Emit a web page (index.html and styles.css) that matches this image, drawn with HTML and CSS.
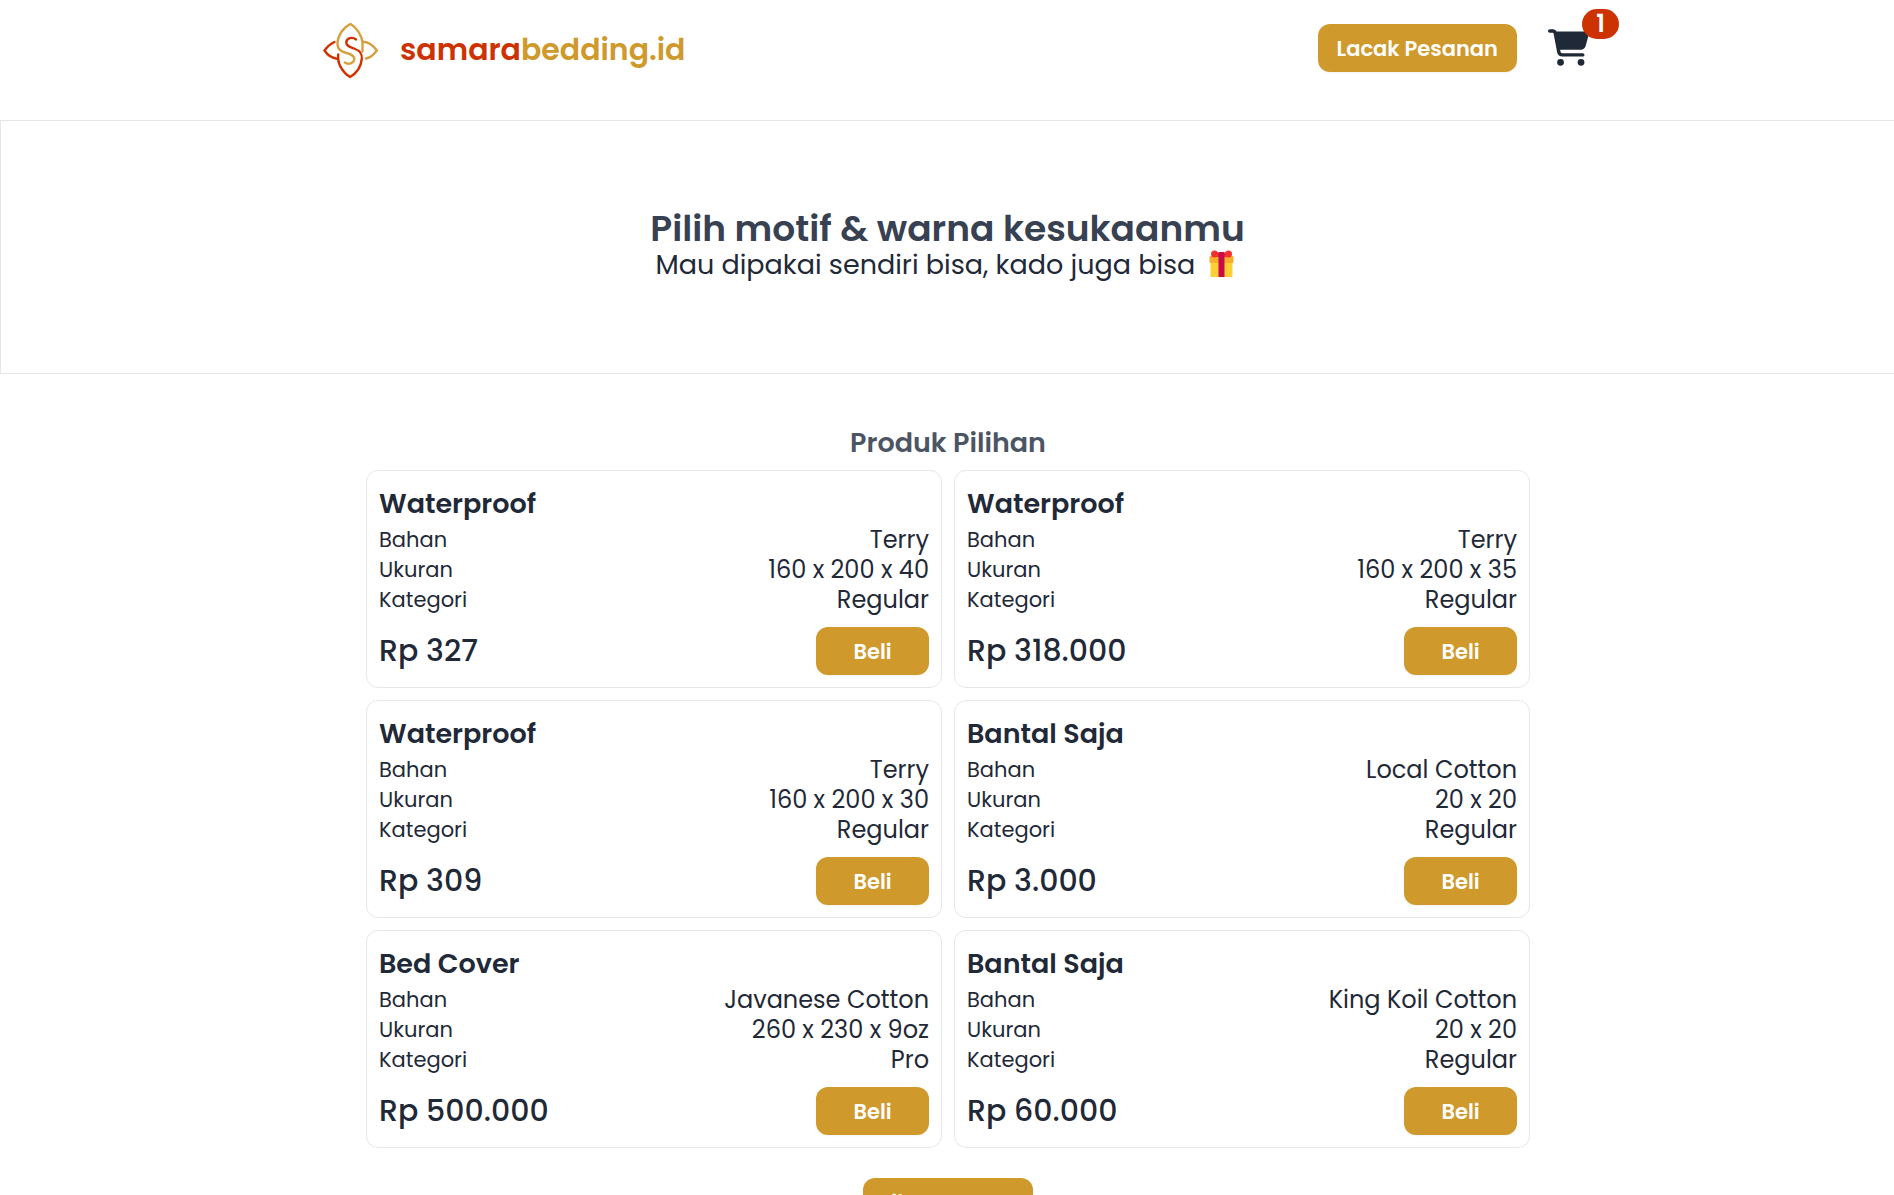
FILE: index.html
```html
<!DOCTYPE html>
<html lang="id">
<head>
    <meta charset="UTF-8">
    <meta name="viewport" content="width=device-width, initial-scale=1.0">
    <title>samarabedding.id</title>
    <link rel="stylesheet" href="styles.css">
</head>
<body>
    <header class="header">
        <a href="#" class="brand">
            <svg class="logo" viewBox="0 0 66 66" fill="none" stroke-width="2.4" stroke-linecap="round">
                <path class="gold" d="M44.500 34.500 V26 C44 18 38 10 32.500 7 C26 10 19.500 18 19.500 27 C19.500 33 24 34.500 28.500 36 C34 37.500 36.500 39 36.300 42 C36 46.500 30.500 48 26.800 45.500"/>
                <path class="gold" d="M45.500 24.800 C51 25.300 55.500 29 58.800 33.500 C56 37.500 53 40.500 48 41.500"/>
                <path class="red" d="M38 22.500 C34.500 19.500 28.300 21 28.300 25.500 C28.300 29 32 30 36 31.500 C41.500 33.500 44.500 36 43.800 42 C43 50 38 56.500 32 60 C26.500 57 20.500 49 20.200 42 V37.500"/>
                <path class="red" d="M16.500 25 C12 27 9 30 6.500 33.500 C9.500 38 13.500 41 19 41.700"/>
            </svg>
            <span class="brand-name"><span class="red-text">samara</span>bedding.id</span>
        </a>
        <div class="actions">
            <button class="btn">Lacak Pesanan</button>
            <a href="#" class="cart" aria-label="Keranjang">
                <svg viewBox="0 0 576 512" fill="currentColor">
                    <path d="M0 24C0 10.700 10.700 0 24 0H69.500c22 0 41.500 12.800 50.600 32h411c26.300 0 45.500 25 38.600 50.400l-41 152.300c-8.500 31.400-37 53.300-69.500 53.300H170.700l5.400 28.500c2.200 11.300 12.100 19.500 23.600 19.500H488c13.300 0 24 10.700 24 24s-10.700 24-24 24H199.700c-34.600 0-64.300-24.600-70.700-58.500L77.400 54.500c-.700-3.800-4-6.500-7.900-6.500H24C10.700 48 0 37.300 0 24zM128 464a48 48 0 1 1 96 0 48 48 0 1 1 -96 0zm336-48a48 48 0 1 1 0 96 48 48 0 1 1 0-96z"/>
                </svg>
                <span class="badge">1</span>
            </a>
        </div>
    </header>

    <section class="hero">
        <h1>Pilih motif &amp; warna kesukaanmu</h1>
        <p>Mau dipakai sendiri bisa, kado juga bisa
            <svg class="gift" viewBox="0 0 24 28">
                <path fill="#fcd034" d="M1 12h22v14q0 1-1 1H2q-1 0-1-1z"/>
                <path fill="#f5b02e" d="M1 6h22q1 0 1 1v5q0 1-1 1H1q-1 0-1-1V7q0-1 1-1z"/>
                <circle fill="#f8312f" cx="5" cy="4" r="3.500"/>
                <circle fill="#f8312f" cx="19" cy="4" r="3.500"/>
                <path fill="#f8312f" d="M5 1l5 2v4H4zM19 1l-5 2v4h6z"/>
                <path fill="#ca0b4a" d="M9 3q0-1 1-1h4q1 0 1 1v24H9z"/>
            </svg>
        </p>
    </section>

    <main class="products">
        <h2>Produk Pilihan</h2>
        <div class="grid">
            <article class="card">
                <h3>Waterproof</h3>
                <dl>
                    <dt>Bahan</dt><dd>Terry</dd>
                    <dt>Ukuran</dt><dd>160 x 200 x 40</dd>
                    <dt>Kategori</dt><dd>Regular</dd>
                </dl>
                <div class="buy">
                    <span class="price">Rp 327</span>
                    <button class="btn btn-buy">Beli</button>
                </div>
            </article>
            <article class="card">
                <h3>Waterproof</h3>
                <dl>
                    <dt>Bahan</dt><dd>Terry</dd>
                    <dt>Ukuran</dt><dd>160 x 200 x 35</dd>
                    <dt>Kategori</dt><dd>Regular</dd>
                </dl>
                <div class="buy">
                    <span class="price">Rp 318.000</span>
                    <button class="btn btn-buy">Beli</button>
                </div>
            </article>
            <article class="card">
                <h3>Waterproof</h3>
                <dl>
                    <dt>Bahan</dt><dd>Terry</dd>
                    <dt>Ukuran</dt><dd>160 x 200 x 30</dd>
                    <dt>Kategori</dt><dd>Regular</dd>
                </dl>
                <div class="buy">
                    <span class="price">Rp 309</span>
                    <button class="btn btn-buy">Beli</button>
                </div>
            </article>
            <article class="card">
                <h3>Bantal Saja</h3>
                <dl>
                    <dt>Bahan</dt><dd>Local Cotton</dd>
                    <dt>Ukuran</dt><dd>20 x 20</dd>
                    <dt>Kategori</dt><dd>Regular</dd>
                </dl>
                <div class="buy">
                    <span class="price">Rp 3.000</span>
                    <button class="btn btn-buy">Beli</button>
                </div>
            </article>
            <article class="card">
                <h3>Bed Cover</h3>
                <dl>
                    <dt>Bahan</dt><dd>Javanese Cotton</dd>
                    <dt>Ukuran</dt><dd>260 x 230 x 9oz</dd>
                    <dt>Kategori</dt><dd>Pro</dd>
                </dl>
                <div class="buy">
                    <span class="price">Rp 500.000</span>
                    <button class="btn btn-buy">Beli</button>
                </div>
            </article>
            <article class="card">
                <h3>Bantal Saja</h3>
                <dl>
                    <dt>Bahan</dt><dd>King Koil Cotton</dd>
                    <dt>Ukuran</dt><dd>20 x 20</dd>
                    <dt>Kategori</dt><dd>Regular</dd>
                </dl>
                <div class="buy">
                    <span class="price">Rp 60.000</span>
                    <button class="btn btn-buy">Beli</button>
                </div>
            </article>
        </div>
        <button class="btn btn-more">Lihat Semua</button>
    </main>
</body>
</html>
```
FILE: styles.css
```css
*{
    box-sizing: border-box;
    margin: 0;
    padding: 0;
}
html{
    scrollbar-width: none;
}
body{
    font-family: Poppins, Inter, sans-serif;
    color: #1f2937;
    background-color: #ffffff;
}
.header{
    display: flex;
    justify-content: space-between;
    align-items: flex-start;
    max-width: 1282px;
    height: 120px;
    margin: 0 auto;
    padding: 0 0 0 12px;
}
.brand{
    display: flex;
    align-items: center;
    gap: 16px;
    padding-top: 17px;
    text-decoration: none;
    color: #cf992b;
}
.logo{
    width: 66px;
    height: 66px;
}
.gold{
    stroke: #d6a040;
}
.red{
    stroke: #cf3300;
}
.brand-name{
    font-size: 30px;
    line-height: 40px;
    font-weight: 600;
}
.red-text{
    color: #cc3300;
}
.actions{
    display: flex;
    gap: 31px;
    padding-top: 24px;
}
.btn{
    height: 48px;
    padding: 0 19px;
    border: none;
    border-radius: 12px;
    background-color: #cf992b;
    color: #ffffff;
    font-family: inherit;
    font-size: 21px;
    font-weight: 600;
    box-shadow: 0 1px 2px rgba(0, 0, 0, 0.05);
    cursor: pointer;
}
.cart{
    position: relative;
    width: 40px;
    padding-top: 5px;
    color: #1f2937;
}
.cart svg{
    display: block;
    width: 41px;
    height: 37px;
}
.badge{
    position: absolute;
    top: -15px;
    left: 34px;
    width: 37px;
    height: 30px;
    border-radius: 15px;
    background-color: #cc3300;
    color: #ffffff;
    font-size: 24px;
    line-height: 30px;
    font-weight: 600;
    text-align: center;
}
.hero{
    padding: 88px 24px 92px;
    border: 1px solid #e5e7eb;
    border-right: none;
    text-align: center;
}
.hero h1{
    font-size: 36px;
    line-height: 40px;
    font-weight: 600;
    color: #374151;
}
.hero p{
    font-size: 27px;
    line-height: 32px;
}
.gift{
    width: 25px;
    height: 28px;
    margin: 0 6px;
    vertical-align: -4px;
}
.products{
    max-width: 1166px;
    margin: 0 auto;
    padding: 52px 0 0 2px;
    text-align: center;
}
.products h2{
    font-size: 27px;
    line-height: 34px;
    font-weight: 600;
    color: #4b5563;
}
.grid{
    display: grid;
    grid-template-columns: 1fr 1fr;
    gap: 12px;
    margin-top: 10px;
    text-align: left;
}
.card{
    padding: 12px;
    border: 1px solid #e5e7eb;
    border-radius: 12px;
}
.card h3{
    font-size: 27px;
    line-height: 42px;
    font-weight: 600;
}
.card dl{
    display: grid;
    grid-template-columns: auto 1fr;
}
.card dt{
    font-size: 21px;
    line-height: 30px;
}
.card dd{
    font-size: 24px;
    line-height: 30px;
    text-align: right;
}
.buy{
    display: flex;
    justify-content: space-between;
    align-items: center;
    margin-top: 12px;
}
.price{
    font-size: 30px;
    line-height: 40px;
    font-weight: 500;
}
.btn-buy{
    width: 113px;
}
.btn-more{
    margin: 30px 0 48px;
}
```
